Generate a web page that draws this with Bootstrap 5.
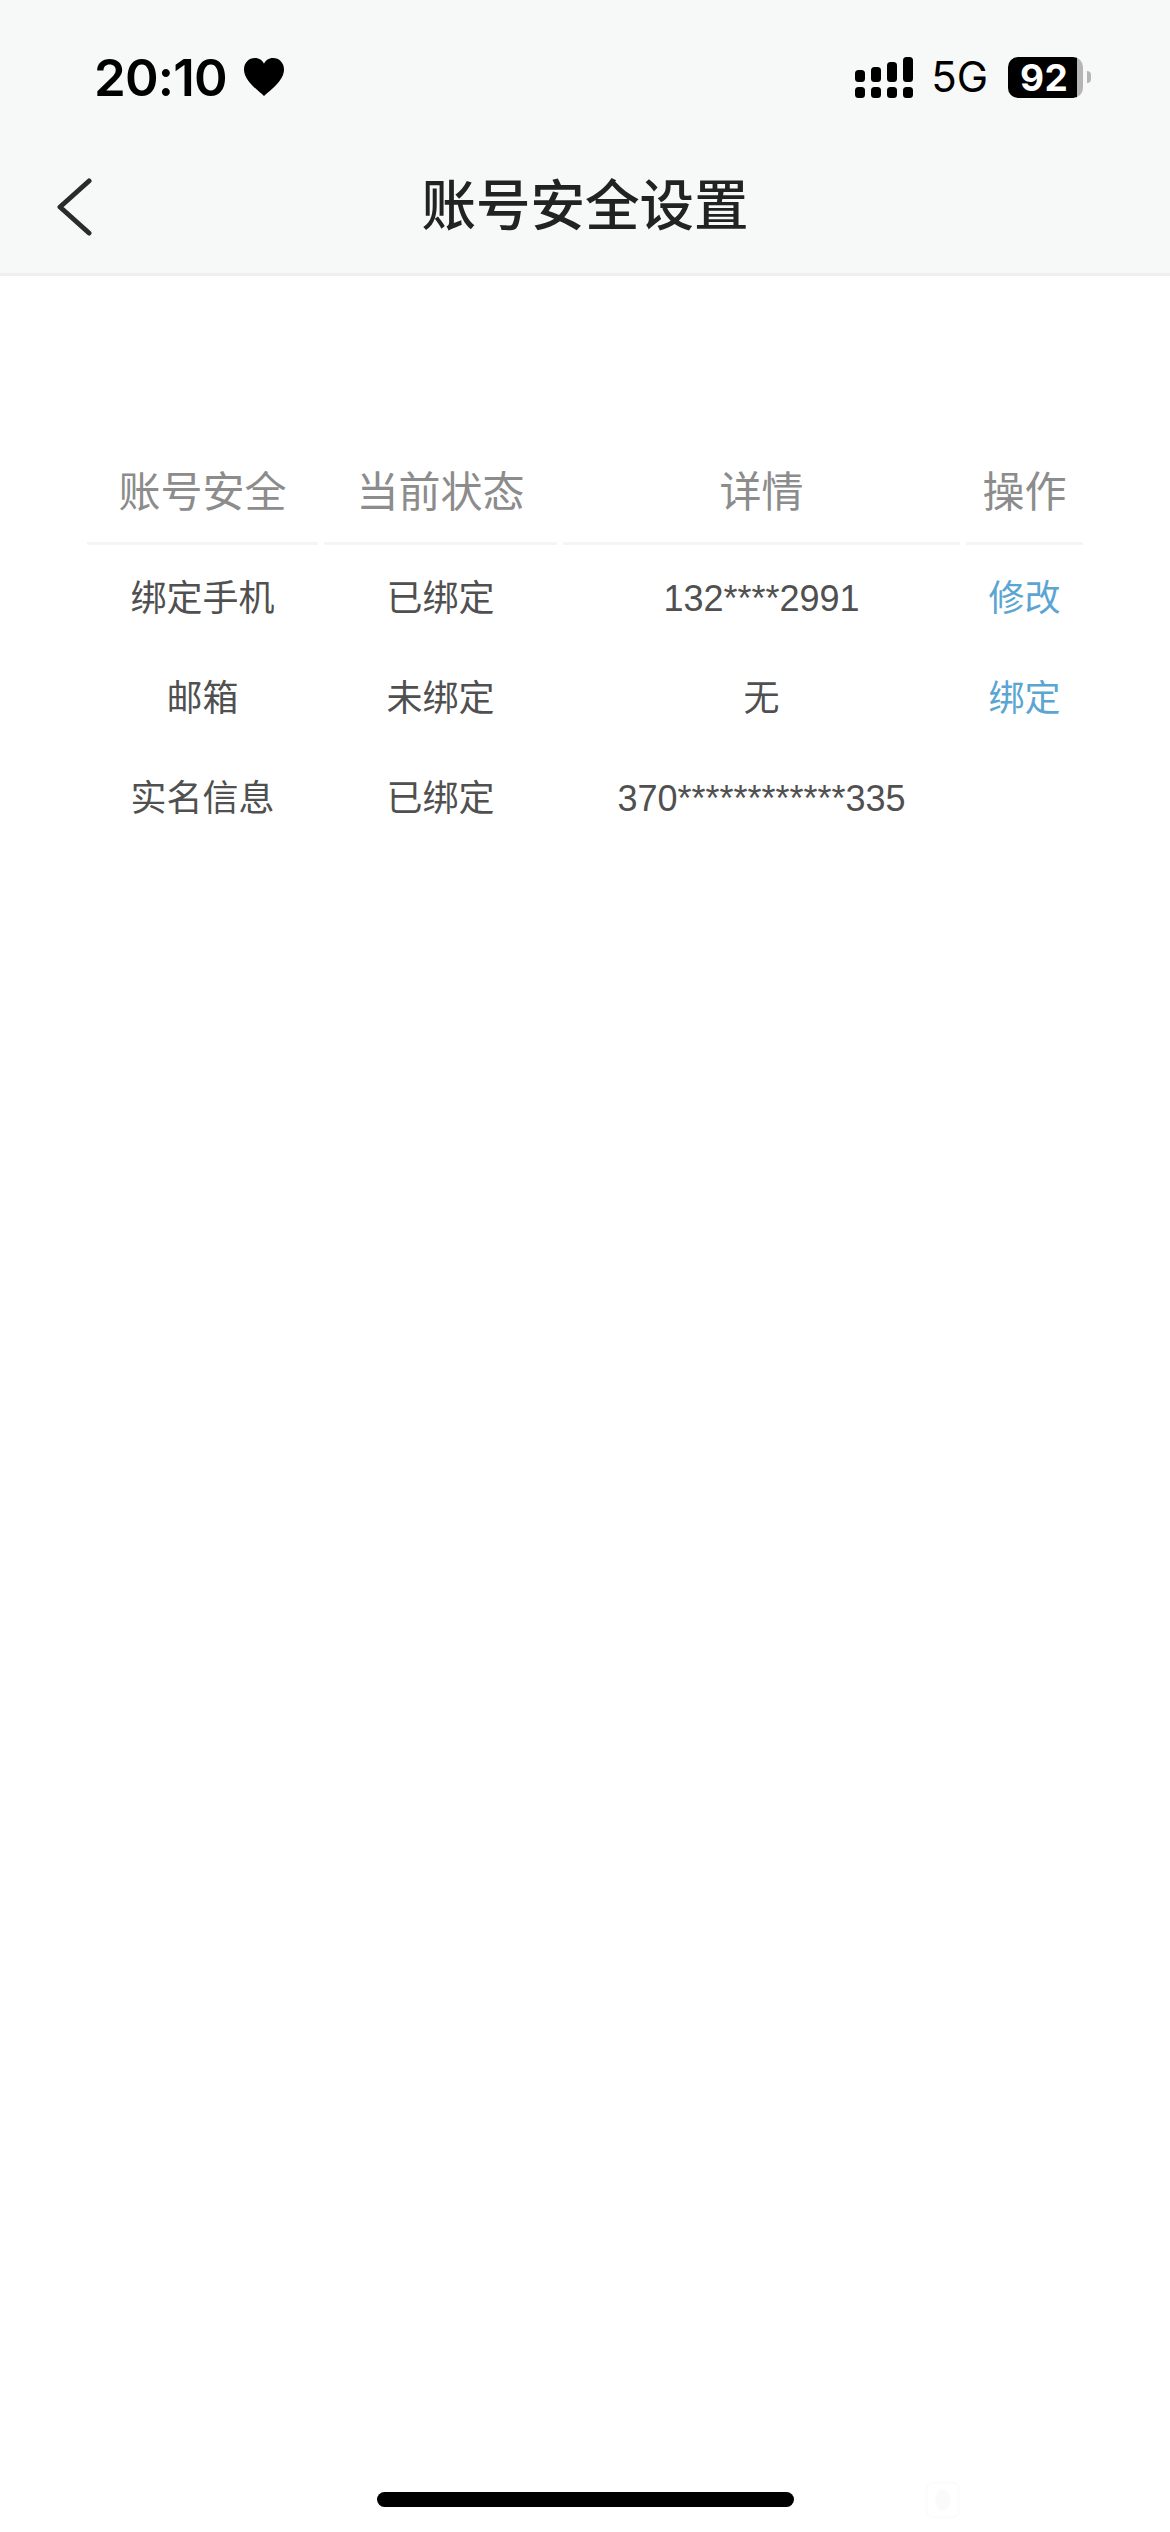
<!doctype html>
<html lang="zh-CN">
<head>
<meta charset="utf-8">
<title>账号安全设置</title>
<link href="https://cdn.jsdelivr.net/npm/bootstrap@5.3.0/dist/css/bootstrap.min.css" rel="stylesheet">
<style>
body{background:#fff;font-family:"Liberation Sans","Noto Sans CJK SC",sans-serif;min-height:2532px;position:relative}
.top-shell{background:#f7f8f8;border-bottom:3px solid #efefef;height:276px}
.status-row{height:154px;padding:0 79px 0 94px}
.clock{font:600 51px/1 Inter,sans-serif;color:#000;letter-spacing:-.8px}
.heart-gap{margin-left:16px}
.net-label{font:400 42px/1 Inter,sans-serif;color:#000;margin:0 20px 0 18px}
.batt{width:75px;height:41px;background:linear-gradient(90deg,#000 69px,#b5b5b5 69px);border-radius:10px;color:#fff;font:700 37px/41px Inter,sans-serif;padding-left:12px;letter-spacing:.5px}
.batt-nub{width:4px;height:12px;background:#b5b5b5;border-radius:0 6px 6px 0}
.title-row{height:119px;display:grid;grid-template-columns:1fr auto 1fr;padding:0 56px}
.page-title{font-size:54.5px;font-weight:500;line-height:1;color:#222;margin:0;padding-bottom:12px}
.back-cell{padding-bottom:14px}
.table-wrap{padding:182px 87px 0}
.sec-table{border-collapse:separate;border-spacing:6px 0;width:calc(100% + 12px);margin:0 -6px;table-layout:fixed;--bs-table-bg:transparent}
.sec-table th{font-size:42px;font-weight:400;color:#8c8c8c;text-align:center;height:87px;padding:0 0 14px;border-bottom:3px solid #f5f5f5;line-height:1.2;vertical-align:middle}
.sec-table td{font-size:36px;color:#505050;text-align:center;height:100px;padding:0;line-height:1.2;vertical-align:middle;border:0}
.sec-table tbody tr:first-child td{height:104px;padding-top:4px}
.sec-table td.act{color:#5ba5d3}
.w-a{width:231px}.w-b{width:233px}.w-c{width:397px}.w-d{width:117px}
.home-bar{position:absolute;left:377px;top:2492px;width:417px;height:15px;background:#000;border-radius:8px}
.ghost{position:absolute;left:926px;top:2482px}
</style>
</head>
<body>
<header class="top-shell">
  <div class="status-row d-flex justify-content-between align-items-center">
    <div class="d-flex align-items-center">
      <span class="clock">20:10</span>
      <svg class="heart-gap" width="42" height="40" viewBox="0 0 44 42" aria-hidden="true"><path fill="#000" d="M22 41C16 35 1 25 1 13 1 6 6 1 12.500 1 17 1 20.500 3.500 22 7 23.500 3.500 27 1 31.500 1 38 1 43 6 43 13 43 25 28 35 22 41Z"/></svg>
    </div>
    <div class="d-flex align-items-center">
      <svg width="58" height="41" viewBox="0 0 58 41" fill="#000" aria-hidden="true">
        <rect x="0" y="13" width="10" height="12" rx="3.500"/><rect x="16" y="10" width="10" height="15" rx="3.500"/><rect x="32" y="5" width="10" height="20" rx="3.500"/><rect x="48" y="0" width="10" height="25" rx="3.500"/>
        <rect x="0" y="30" width="10" height="11" rx="3.500"/><rect x="16" y="30" width="10" height="11" rx="3.500"/><rect x="32" y="30" width="10" height="11" rx="3.500"/><rect x="48" y="30" width="10" height="11" rx="3.500"/>
      </svg>
      <span class="net-label">5G</span>
      <span class="batt">92</span>
      <span class="batt-nub ms-1"></span>
    </div>
  </div>
  <div class="title-row align-items-center">
    <div class="back-cell">
      <svg width="36" height="58" viewBox="0 0 36 58" fill="none" stroke="#2b2b2b" stroke-width="5" stroke-linecap="round" stroke-linejoin="round" aria-hidden="true"><path d="M33 3 4 29 33 55"/></svg>
    </div>
    <h1 class="page-title">账号安全设置</h1>
    <div></div>
  </div>
</header>
<main class="table-wrap">
  <table class="table table-borderless sec-table">
    <colgroup><col class="w-a"><col class="w-b"><col class="w-c"><col class="w-d"></colgroup>
    <thead><tr><th>账号安全</th><th>当前状态</th><th>详情</th><th>操作</th></tr></thead>
    <tbody>
      <tr><td>绑定手机</td><td>已绑定</td><td>132****2991</td><td class="act">修改</td></tr>
      <tr><td>邮箱</td><td>未绑定</td><td>无</td><td class="act">绑定</td></tr>
      <tr><td>实名信息</td><td>已绑定</td><td>370************335</td><td></td></tr>
    </tbody>
  </table>
</main>
<div class="home-bar"></div>
<svg class="ghost" width="34" height="36" viewBox="0 0 34 36" fill="none" stroke="#fbfbfb" stroke-width="1.500" aria-hidden="true"><rect x="1" y="1" width="32" height="34" rx="5"/><ellipse cx="17" cy="18" rx="7" ry="10" fill="#fafafa"/></svg>
<script src="https://cdn.jsdelivr.net/npm/bootstrap@5.3.0/dist/js/bootstrap.bundle.min.js"></script>
</body>
</html>
